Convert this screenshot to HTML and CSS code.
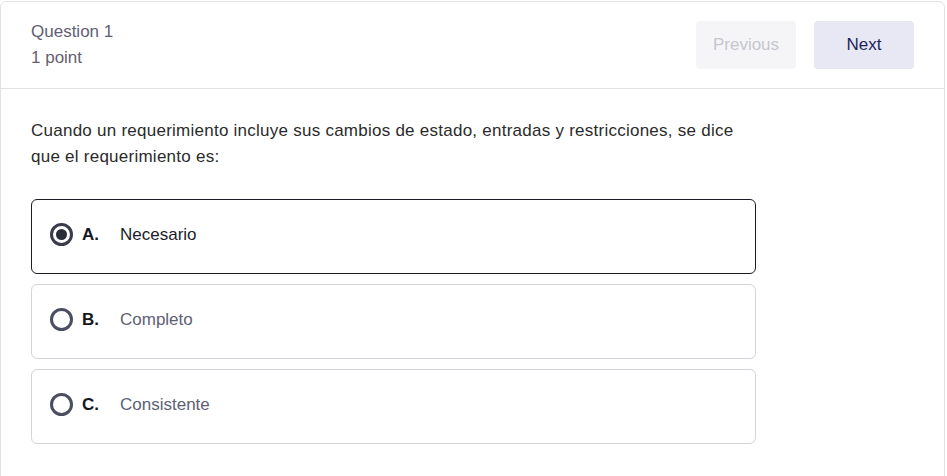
FILE: index.html
```html
<!DOCTYPE html>
<html lang="es">
<head>
<meta charset="utf-8">
<title>Question 1</title>
<link rel="stylesheet" href="styles.css">
</head>
<body>
<div class="card">
  <div class="header">
    <div class="meta">
      <div class="q-title">Question 1</div>
      <div class="q-points">1 point</div>
    </div>
    <div class="nav">
      <button class="btn btn-prev" disabled>Previous</button>
      <button class="btn btn-next">Next</button>
    </div>
  </div>
  <div class="body">
    <p class="question">Cuando un requerimiento incluye sus cambios de estado, entradas y restricciones, se dice que el requerimiento es:</p>
    <div class="options">
      <div class="option selected">
        <span class="radio"><span class="dot"></span></span>
        <span class="letter">A.</span>
        <span class="label">Necesario</span>
      </div>
      <div class="option">
        <span class="radio"></span>
        <span class="letter">B.</span>
        <span class="label">Completo</span>
      </div>
      <div class="option">
        <span class="radio"></span>
        <span class="letter">C.</span>
        <span class="label">Consistente</span>
      </div>
    </div>
  </div>
</div>
</body>
</html>
```
FILE: styles.css
```css
html, body {
  margin: 0;
  padding: 0;
  background: #ffffff;
  overflow: hidden;
}
body {
  font-family: "Liberation Sans", Arial, sans-serif;
  font-size: 17px;
  color: #2d2d2d;
  padding-top: 1px;
}
.card {
  width: 945px;
  box-sizing: border-box;
  border: 1px solid #e2e2e6;
  border-radius: 6px;
  height: 490px;
}
.header {
  height: 86px;
  display: flex;
  align-items: center;
  justify-content: space-between;
  padding: 0 30px;
  border-bottom: 1px solid #e2e2e6;
}
.meta {
  line-height: 26px;
  color: #5e6074;
}
.q-points {
  color: #66606f;
}
.nav {
  display: flex;
  gap: 18px;
}
.btn {
  width: 100px;
  height: 48px;
  border: none;
  border-radius: 4px;
  font-family: "Liberation Sans", Arial, sans-serif;
  font-size: 17px;
  padding: 0;
}
.btn-prev {
  background: #f5f5f8;
  color: #c6c6cd;
}
.btn-next {
  background: #e7e8f4;
  color: #1d1f5e;
}
.body {
  padding: 29px 30px 30px;
}
.question {
  margin: 0;
  width: 725px;
  line-height: 26px;
  letter-spacing: 0.25px;
  color: #2b2b2b;
}
.options {
  margin-top: 29px;
  width: 725px;
  display: flex;
  flex-direction: column;
  gap: 10px;
}
.option {
  height: 75px;
  box-sizing: border-box;
  border: 1px solid #d3d3da;
  border-radius: 6px;
  display: flex;
  align-items: center;
  padding: 0 0 4px 18px;
}
.option.selected {
  border-color: #1c1c24;
}
.radio {
  width: 23px;
  height: 23px;
  box-sizing: border-box;
  border: 3px solid #4b4d62;
  border-radius: 50%;
  display: flex;
  align-items: center;
  justify-content: center;
  flex: none;
}
.selected .radio {
  border-color: #3a3b4c;
}
.dot {
  width: 11px;
  height: 11px;
  border-radius: 50%;
  background: #2b2c3a;
}
.letter {
  font-weight: bold;
  color: #16161e;
  width: 38px;
  margin-left: 9px;
}
.label {
  color: #5e6074;
}
.selected .label {
  color: #1c1c2a;
}
```
